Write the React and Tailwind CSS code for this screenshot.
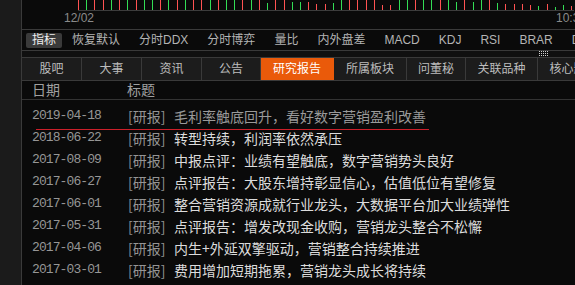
import React from "react";

const ticks = [
  ["r",0],["g",0],["r",0],["r",0],["g",0],["r",0],["g",0],["r",0],["g",0],["g",0],
  ["r",0],["g",0],["r",0],["g",0],["r",0],["r",0],["g",0],["r",0],["g",0],["g",0],
  ["r",0],["g",0],["r",0],["g",3],["r",0],["r",0],["g",2],["g",2],["r",2],["r",4],
  ["r",4],["g",3],["g",0],["r",0],["r",0],["r",0],["r",0],["r",5],["r",5],["g",0],
  ["g",0],["r",0],["g",0],["g",0],["r",0],["g",0],["g",2],["r",0],["g",2],["g",0],
  ["r",0],["g",3],["r",4],["r",4],["r",4],["r",5],["g",6],["r",4],["g",7],["g",5],
  ["r",6],
];

const rows = [
  ["2019-04-18", "毛利率触底回升，看好数字营销盈利改善", true],
  ["2018-06-22", "转型持续，利润率依然承压"],
  ["2017-08-09", "中报点评：业绩有望触底，数字营销势头良好"],
  ["2017-06-27", "点评报告：大股东增持彰显信心，估值低位有望修复"],
  ["2017-06-01", "整合营销资源成就行业龙头，大数据平台加大业绩弹性"],
  ["2017-05-31", "点评报告：增发改现金收购，营销龙头整合不松懈"],
  ["2017-04-06", "内生+外延双擎驱动，营销整合持续推进"],
  ["2017-03-01", "费用增加短期拖累，营销龙头成长将持续"],
];

const tabs = [
  ["股吧", "w-[60px]"],
  ["大事", "w-[60px]"],
  ["资讯", "w-[60px]"],
  ["公告", "w-[59px]"],
  ["研究报告", "w-[73px]", true],
  ["所属板块", "w-[73px]"],
  ["问董秘", "w-[59px]"],
  ["关联品种", "w-[72px]"],
  ["核心题材", "w-[72px]"],
];

const menu = ["分时DDX", "分时博弈", "量比", "内外盘差", "MACD", "KDJ", "RSI", "BRAR", "DMI"];

export default function App() {
  return (
    <div
      className="w-[575px] h-[285px] flex overflow-hidden bg-[#0a0a0a]"
      style={{ fontFamily: '"Liberation Sans", "Noto Sans CJK SC", sans-serif' }}
    >
      <div className="w-[22px] shrink-0 bg-[#1b1b1b] border-r border-[#3a3a3a]" />
      <div className="flex-1 flex flex-col min-w-0">
        {/* chart strip */}
        <div className="h-[30px] shrink-0 relative border-b border-[#3a3a3a]">
          <svg width="552" height="11" className="absolute left-0 top-0" shapeRendering="crispEdges">
            <rect x="56" y="10" width="496" height="1" fill="#3c3c3c" />
            {ticks.map(([c, t], i) => (
              <rect
                key={i}
                x={Math.round(56 + 8.22 * i)}
                y={t}
                width="1"
                height={10 - t}
                fill={c === "r" ? "#ff5252" : "#33dd55"}
              />
            ))}
          </svg>
          <span className="absolute left-[42px] top-[11px] text-[12px] leading-[14px] text-[#8a8a8a]">12/02</span>
          <span className="absolute left-[534px] top-[11px] text-[12px] leading-[14px] text-[#8a8a8a] whitespace-nowrap">10:30</span>
        </div>
        {/* menu bar */}
        <div className="h-[21px] shrink-0 flex items-center border-b border-[#3a3a3a] pl-[4px] whitespace-nowrap text-[12px] text-[#b4b4b4]">
          <div className="w-[36px] h-[15px] shrink-0 rounded-[2px] bg-[#3a3a3a] text-[#eeeeee] flex items-center justify-center leading-none">
            指标
          </div>
          <span className="ml-[10px] leading-none">恢复默认</span>
          {menu.map((m) => (
            <span key={m} className="ml-[19px] leading-none shrink-0">{m}</span>
          ))}
        </div>
        {/* band */}
        <div className="h-[6px] shrink-0 bg-[#101010] relative">
          <svg width="9" height="5" className="absolute left-[517px] top-0" shapeRendering="crispEdges">
            {[0, 2, 4].map((y) =>
              [0, 2, 4, 6, 8].map((x) => <rect key={x + "-" + y} x={x} y={y} width="1" height="1" fill="#d0d0d0" />)
            )}
          </svg>
        </div>
        {/* tabs */}
        <div className="h-[24px] shrink-0 flex border-y border-[#3a3a3a] bg-[#1c1c1c] text-[12px] whitespace-nowrap overflow-hidden">
          {tabs.map(([t, w, active]) => (
            <div
              key={t}
              className={
                w +
                " shrink-0 h-full flex items-center justify-center border-r " +
                (active ? "bg-[#ea5a0a] border-[#ea5a0a] text-white" : "border-[#3a3a3a] text-[#bdbdbd]")
              }
            >
              {t}
            </div>
          ))}
        </div>
        {/* header */}
        <div className="h-[19px] shrink-0 flex items-center border-b border-[#333333] text-[14px] text-[#a0a0a0]">
          <span className="pl-[10px] w-[105px]">日期</span>
          <span>标题</span>
        </div>
        {/* rows */}
        <div className="relative flex-1 pt-[5px]">
          <div className="absolute left-[14px] top-[29px] w-[393px] h-[1px] bg-[#cc1f2a]" />
          {rows.map(([d, t, dim]) => (
            <div key={d + t} className="h-[22px] flex items-center whitespace-nowrap">
              <span
                className="pl-[10px] w-[106px] shrink-0 text-[13px] tracking-[-0.9px] text-[#969696]"
                style={{ fontFamily: '"Liberation Mono", monospace' }}
              >
                {d}
              </span>
              <span
                className="w-[46px] shrink-0 text-[14px] text-[#959595]"
                style={{ fontFamily: '"Noto Sans CJK SC", sans-serif' }}
              >
                [研报]
              </span>
              <span
                className={"text-[14px] " + (dim ? "text-[#9a9a9a]" : "text-[#dcdcdc]")}
                style={{ fontFamily: '"Noto Sans CJK SC", sans-serif' }}
              >
                {t}
              </span>
            </div>
          ))}
        </div>
      </div>
    </div>
  );
}
